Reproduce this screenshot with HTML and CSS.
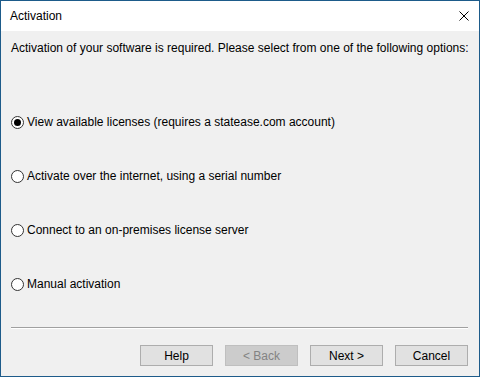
FILE: index.html
```html
<!DOCTYPE html>
<html lang="en">
<head>
    <meta charset="UTF-8">
    <title>Activation</title>
    <link rel="stylesheet" href="styles.css">
</head>
<body>
    <div class="window">
        <div class="titlebar">
            <span class="title">Activation</span>
            <span class="close">
                <svg width="10" height="10" viewBox="0 0 10 10">
                    <path d="M0.5 0.5 L9.5 9.5 M9.5 0.5 L0.5 9.5" stroke="#000" stroke-width="1" fill="none"/>
                </svg>
            </span>
        </div>
        <div class="content">
            <p class="intro">Activation of your software is required. Please select from one of the following options:</p>

            <div class="options">
                <label class="option"><span class="radio checked"></span>View available licenses (requires a statease.com account)</label>
                <label class="option"><span class="radio"></span>Activate over the internet, using a serial number</label>
                <label class="option"><span class="radio"></span>Connect to an on-premises license server</label>
                <label class="option"><span class="radio"></span>Manual activation</label>
            </div>

            <div class="separator"></div>

            <div class="buttons">
                <button class="btn">Help</button>
                <button class="btn disabled">&lt; Back</button>
                <button class="btn">Next &gt;</button>
                <button class="btn">Cancel</button>
            </div>
        </div>
    </div>
</body>
</html>
```

FILE: styles.css
```css
body {
    margin: 0;
    font-family: "Liberation Sans", Arial, sans-serif;
    font-size: 12px;
    color: #000;
}
.window {
    width: 480px;
    height: 377px;
    box-sizing: border-box;
    border: 1px solid #1d5b8a;
    display: flex;
    flex-direction: column;
    background: #f0f0f0;
}
.titlebar {
    height: 30px;
    background: white;
    display: flex;
    align-items: center;
    justify-content: space-between;
    padding: 0 8px 0 9px;
    flex-shrink: 0;
}
.title {
    line-height: 16px;
}
.close {
    display: flex;
    width: 14px;
    justify-content: center;
}
.content {
    flex: 1;
    padding: 0 11px 0 10px;
}
.intro {
    margin: 9px 0 0;
    line-height: 16px;
    white-space: nowrap;
}
.options {
    margin-top: 58px;
    display: flex;
    flex-direction: column;
    gap: 38px;
}
.option {
    display: flex;
    align-items: center;
    height: 16px;
    line-height: 16px;
}
.radio {
    width: 11px;
    height: 11px;
    border: 1px solid #333;
    border-radius: 50%;
    margin-right: 3px;
    display: flex;
    align-items: center;
    justify-content: center;
    background: white;
}
.radio.checked::after {
    content: "";
    width: 7px;
    height: 7px;
    border-radius: 50%;
    background: #000;
}
.separator {
    margin-top: 35px;
    height: 1px;
    background: #a0a0a0;
    border-bottom: 1px solid #fff;
}
.buttons {
    margin-top: 16px;
    display: flex;
    justify-content: flex-end;
    gap: 12px;
}
.btn {
    width: 73px;
    height: 21px;
    padding: 0;
    font-family: inherit;
    font-size: 12px;
    color: #000;
    background: #e1e1e1;
    border: 1px solid #adadad;
}
.btn.disabled {
    background: #cccccc;
    border-color: #bfbfbf;
    color: #838383;
}
```
